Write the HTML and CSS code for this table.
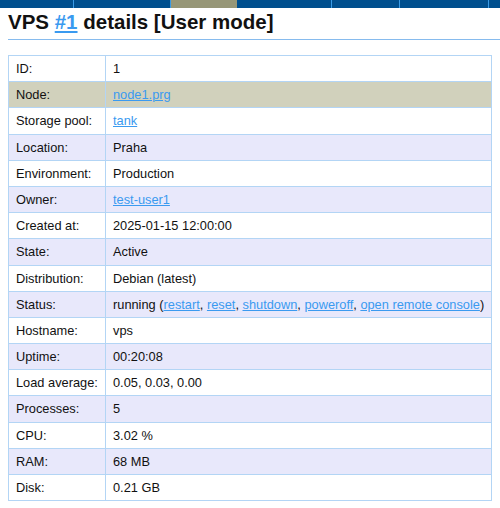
FILE: index.html
```html
<!DOCTYPE html>
<html>
<head>
<meta charset="utf-8">
<link rel="stylesheet" href="styles.css">
</head>
<body>
<div class="topbar">
  <span class="tab t1"></span>
  <span class="tab t2"></span>
  <span class="tab t3 active"></span>
  <span class="tab t4 nb"></span>
  <span class="tab t5"></span>
  <span class="tab t6"></span>
  <span class="tab t7"></span>
</div>
<h1 class="title">VPS <a href="#">#1</a> details [User mode]</h1>
<table class="details">
  <colgroup><col class="c1"><col class="c2"></colgroup>
  <tr><td class="lbl">ID:</td><td>1</td></tr>
  <tr class="hl"><td class="lbl">Node:</td><td><a href="#">node1.prg</a></td></tr>
  <tr><td class="lbl">Storage pool:</td><td><a href="#">tank</a></td></tr>
  <tr class="alt"><td class="lbl">Location:</td><td>Praha</td></tr>
  <tr><td class="lbl">Environment:</td><td>Production</td></tr>
  <tr class="alt"><td class="lbl">Owner:</td><td><a href="#">test-user1</a></td></tr>
  <tr><td class="lbl">Created at:</td><td>2025-01-15 12:00:00</td></tr>
  <tr class="alt"><td class="lbl">State:</td><td>Active</td></tr>
  <tr><td class="lbl">Distribution:</td><td>Debian (latest)</td></tr>
  <tr class="alt"><td class="lbl">Status:</td><td>running (<a href="#">restart</a>, <a href="#">reset</a>, <a href="#">shutdown</a>, <a href="#">poweroff</a>, <a href="#">open remote console</a>)</td></tr>
  <tr><td class="lbl">Hostname:</td><td>vps</td></tr>
  <tr class="alt"><td class="lbl">Uptime:</td><td>00:20:08</td></tr>
  <tr><td class="lbl">Load average:</td><td>0.05, 0.03, 0.00</td></tr>
  <tr class="alt"><td class="lbl">Processes:</td><td>5</td></tr>
  <tr><td class="lbl">CPU:</td><td>3.02 %</td></tr>
  <tr class="alt"><td class="lbl">RAM:</td><td>68 MB</td></tr>
  <tr><td class="lbl">Disk:</td><td>0.21 GB</td></tr>
</table>
</body>
</html>
```
FILE: styles.css
```css
html, body {
  margin: 0;
  padding: 0;
  background: #fff;
}
body {
  font-family: "Liberation Sans", Arial, sans-serif;
  color: #111;
  overflow: hidden;
}
.topbar {
  display: flex;
  height: 8px;
  background: #004f8e;
}
.tab {
  height: 8px;
  border-left: 1px solid #3a9be6;
  box-sizing: border-box;
}
.tab.t1 { width: 73px; border-left: none; }
.tab.t2 { width: 97px; }
.tab.t3 { width: 67px; }
.tab.t4 { width: 94px; }
.tab.t5 { width: 68px; }
.tab.t6 { width: 89px; }
.tab.t7 { flex: 1; }
.tab.active { background: #979778; }
.tab.nb { border-left: none; }
.title {
  margin: 0 0 15px 8px;
  padding: 2px 0 5px 0;
  font-size: 20.5px;
  font-weight: bold;
  color: #111;
  border-bottom: 1px solid #86bbee;
  line-height: 24px;
}
a {
  color: #3a9af0;
  text-decoration: underline;
}
.details {
  margin: 0 8px;
  width: 484px;
  border-collapse: collapse;
  table-layout: fixed;
  font-size: 12.8px;
  border: 1px solid #b3d5f5;
}
.details col.c1 { width: 97px; }
.details td {
  border: 1px solid #b3d5f5;
  padding: 5px 7px;
  line-height: 15.18px;
  white-space: nowrap;
}
.details tr.alt td {
  background: #e8e8fb;
}
.details tr.hl td {
  background: #d1d1bc;
}
```
